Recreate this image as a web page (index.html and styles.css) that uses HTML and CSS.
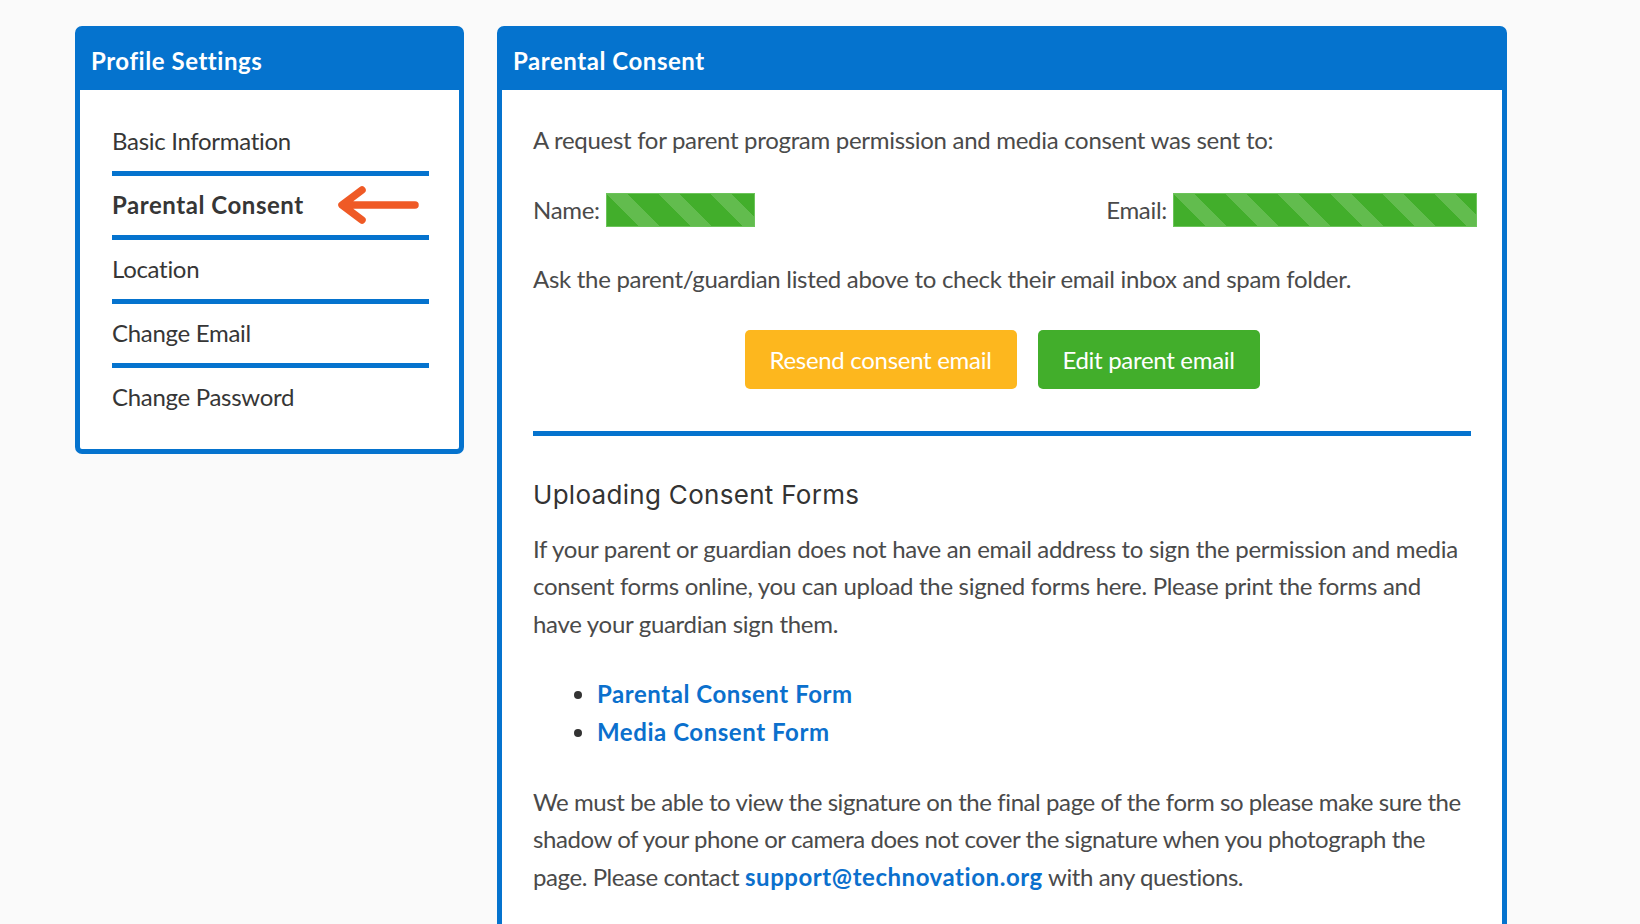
FILE: index.html
```html
<!DOCTYPE html>
<html lang="en">
<head>
<meta charset="utf-8">
<title>Parental Consent</title>
<link rel="stylesheet" href="styles.css">
</head>
<body>
<div class="page">
  <aside class="panel sidebar">
    <div class="panel-head">Profile Settings</div>
    <ul class="nav">
      <li class="nav-item">Basic Information</li>
      <li class="nav-item active">Parental Consent
        <svg class="arrow" width="84" height="40" viewBox="0 0 84 40" aria-hidden="true">
          <path d="M80 20 H8 M27 5 L7 20 L27 35" fill="none" stroke="#ef5a26" stroke-width="7.5" stroke-linecap="round" stroke-linejoin="round"/>
        </svg>
      </li>
      <li class="nav-item">Location</li>
      <li class="nav-item">Change Email</li>
      <li class="nav-item last">Change Password</li>
    </ul>
  </aside>

  <main class="panel main">
    <div class="panel-head">Parental Consent</div>
    <div class="content">
      <p class="text">A request for parent program permission and media consent was sent to:</p>
      <div class="info-row">
        <div class="field"><span>Name:</span><span class="redact name-bar"></span></div>
        <div class="field"><span>Email:</span><span class="redact email-bar"></span></div>
      </div>
      <p class="text ask">Ask the parent/guardian listed above to check their email inbox and spam folder.</p>
      <div class="actions">
        <button class="btn btn-yellow">Resend consent email</button>
        <button class="btn btn-green">Edit parent email</button>
      </div>
      <hr class="rule">
      <h2 class="section-title">Uploading Consent Forms</h2>
      <p class="text">If your parent or guardian does not have an email address to sign the permission and media consent forms online, you can upload the signed forms here. Please print the forms and have your guardian sign them.</p>
      <ul class="links">
        <li><a href="#">Parental Consent Form</a></li>
        <li><a href="#">Media Consent Form</a></li>
      </ul>
      <p class="text note">We must be able to view the signature on the final page of the form so please make sure the shadow of your phone or camera does not cover the signature when you photograph the page. Please contact <a href="#">support@technovation.org</a> with any questions.</p>
    </div>
  </main>
</div>
</body>
</html>
```

FILE: styles.css
```css
* { box-sizing: border-box; }

html, body {
  margin: 0;
  padding: 0;
  background: #fafafa;
  font-family: Lato, "Noto Sans", "Liberation Sans", sans-serif;
  color: #4a4a4a;
}

.page {
  display: flex;
  align-items: flex-start;
  gap: 33px;
  padding: 26px 0 0 75px;
}

.panel {
  background: #ffffff;
  border: 5px solid #0573ce;
  border-radius: 7px;
}

.sidebar { width: 389px; flex: none; }
.main { width: 1010px; flex: none; padding-bottom: 40px; }

.panel-head {
  background: #0573ce;
  color: #ffffff;
  font-weight: 700;
  font-size: 24px;
  letter-spacing: 0.55px;
  height: 59px;
  line-height: 59px;
  padding-left: 11px;
}

.nav {
  list-style: none;
  margin: 0;
  padding: 22px 30px 22px 32px;
}

.nav-item {
  display: flex;
  align-items: center;
  height: 64px;
  padding-bottom: 2px;
  font-size: 24px;
  letter-spacing: -0.3px;
  color: #363636;
  border-bottom: 5px solid #0573ce;
}

.nav-item.last { border-bottom: none; height: 59px; }

.nav-item.active { font-weight: 700; letter-spacing: 0.55px; }

.arrow { margin-left: 31px; flex: none; }

.content { padding: 31px 31px 0 31px; }

.text {
  margin: 0;
  font-size: 24px;
  line-height: 37.8px;
  letter-spacing: -0.3px;
}

.note { letter-spacing: -0.42px; }

.info-row {
  display: flex;
  justify-content: space-between;
  align-items: center;
  margin: 32px -6px 0 0;
  font-size: 24px;
  line-height: 38px;
  letter-spacing: -0.3px;
}

.field { display: flex; align-items: center; gap: 6px; }

.redact {
  display: block;
  height: 34px;
  background: repeating-linear-gradient(45deg, #42ae2b 0 22px, #62bc4e 22px 37px);
  border: 1px solid #6cc45a;
}
.name-bar { width: 149px; }
.email-bar { width: 304px; }

.ask { margin-top: 31px; }

.actions {
  display: flex;
  justify-content: center;
  gap: 21px;
  margin-top: 32px;
}

.btn {
  height: 59px;
  padding: 0;
  border: none;
  border-radius: 5px;
  font-family: Lato, "Noto Sans", "Liberation Sans", sans-serif;
  font-size: 24px;
  letter-spacing: -0.3px;
  color: #ffffff;
  cursor: pointer;
}
.btn-yellow { background: #fdb71e; width: 272px; }
.btn-green { background: #42ae2b; width: 222px; }

.rule {
  margin: 42px 0 0 0;
  border: none;
  border-top: 5px solid #0573ce;
  height: 0;
}

.section-title {
  margin: 44px 0 0 0;
  font-family: Inter, "Noto Sans", sans-serif;
  font-weight: 400;
  font-size: 26px;
  letter-spacing: 0.3px;
  line-height: 30px;
  color: #333333;
}

.section-title + .text { margin-top: 20px; }

.links {
  margin: 32px 0 0 0;
  padding-left: 64px;
  font-size: 24px;
  line-height: 37.8px;
}

.links li::marker { color: #333333; }

a {
  color: #0b70cd;
  font-weight: 700;
  letter-spacing: 0.55px;
  text-decoration: none;
}

.links + .text { margin-top: 32px; }
```
